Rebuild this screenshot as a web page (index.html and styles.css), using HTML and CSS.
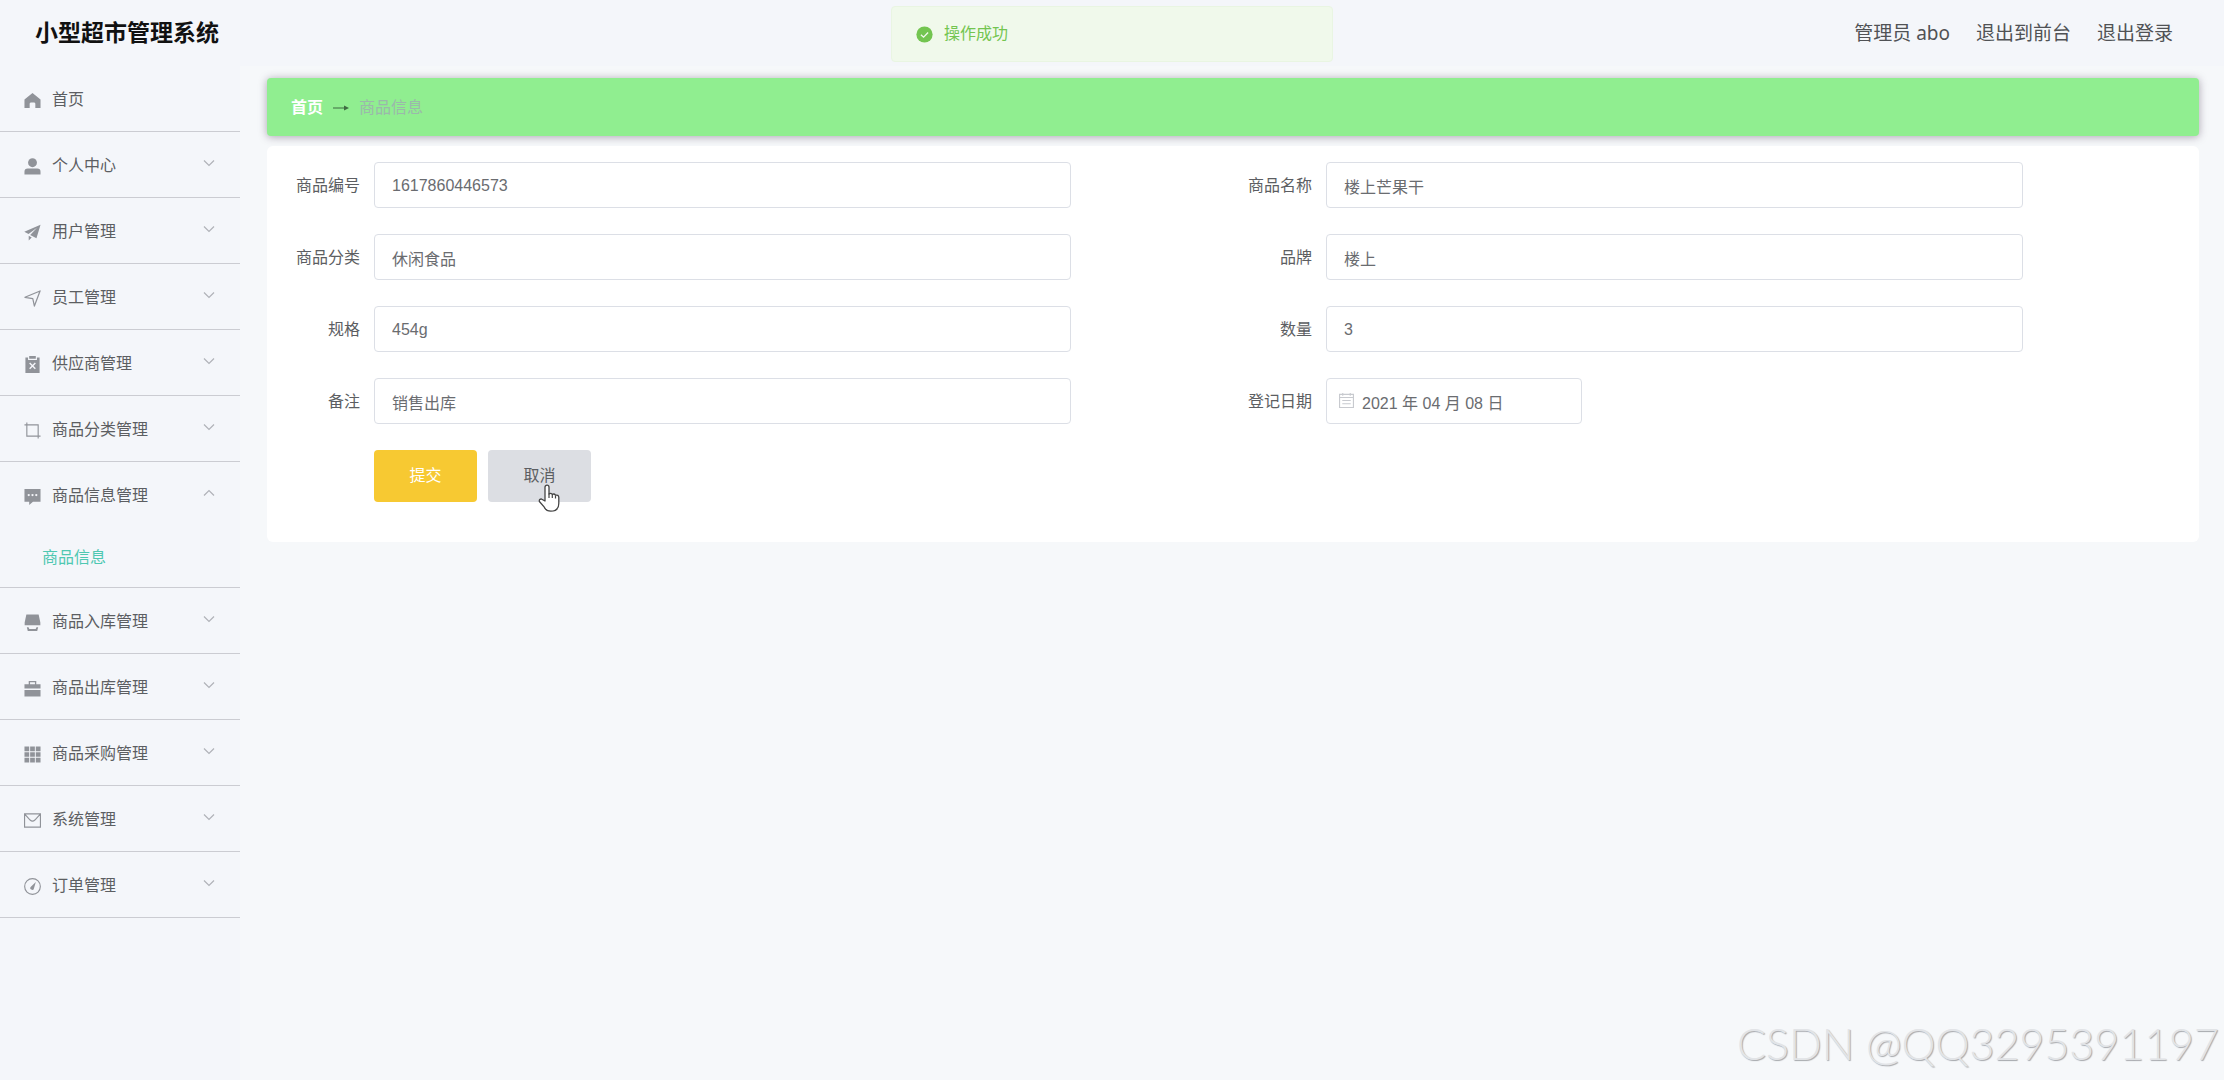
FILE: index.html
```html
<!DOCTYPE html>
<html lang="zh-CN">
<head>
<meta charset="utf-8">
<meta name="viewport" content="width=device-width, initial-scale=1">
<title>小型超市管理系统</title>
<link rel="stylesheet" href="styles.css">
</head>
<body>
<svg class="sprite" aria-hidden="true">
  <symbol id="chevron" viewBox="0 0 12 12"><path d="M1 3.5 6 8.5 11 3.5" fill="none" stroke="currentColor" stroke-width="1.2"/></symbol>
</svg>

<header class="topbar">
  <h1 class="brand">小型超市管理系统</h1>
  <nav class="account">
    <span>管理员 abo</span>
    <a href="#front">退出到前台</a>
    <a href="#logout">退出登录</a>
  </nav>
</header>

<div class="toast" role="status">
  <svg class="icon" viewBox="0 0 18 18"><circle cx="9" cy="9" r="8.6" fill="currentColor"/><path d="M5.2 9.2 8 11.8 12.8 6.8" fill="none" stroke="#f0f9eb" stroke-width="1.4"/></svg>
  <span>操作成功</span>
</div>

<div class="layout">
  <nav class="sidebar">
    <ul class="menu">
      <li><a class="entry" href="#home"><svg class="icon" viewBox="0 0 18 18"><path fill="currentColor" d="M9 1 17.5 8v9H12v-4.500a1.500 1.500 0 0 0-1.500-1.500h-3A1.500 1.500 0 0 0 6 12.500V17H.5V8z"/></svg><span>首页</span></a></li>
      <li><button class="entry" type="button"><svg class="icon" viewBox="0 0 18 18"><circle cx="9" cy="5" r="4.700" fill="currentColor"/><path fill="currentColor" d="M.5 17.500V14.500a3.500 3.500 0 0 1 3.500-3.500h10a3.500 3.500 0 0 1 3.500 3.500v3z"/></svg><span>个人中心</span><svg class="arrow"><use href="#chevron"/></svg></button></li>
      <li><button class="entry" type="button"><svg class="icon" viewBox="0 0 18 18"><path fill="currentColor" d="M17.500.8.3 8.300l4.500 2.300 9-6.500-7.300 7.600 6.700 3.500zM5 12.500v5l3.200-3.300z"/></svg><span>用户管理</span><svg class="arrow"><use href="#chevron"/></svg></button></li>
      <li><button class="entry" type="button"><svg class="icon" viewBox="0 0 18 18"><path fill="none" stroke="currentColor" stroke-width="1.300" stroke-linejoin="round" d="M17 1 1 7.700l8.300 1.500 1.700 7.800z"/></svg><span>员工管理</span><svg class="arrow"><use href="#chevron"/></svg></button></li>
      <li><button class="entry" type="button"><svg class="icon" viewBox="0 0 18 18"><path fill="currentColor" d="M5.500 0h7v3h-7zM1.500 1.500h2.800V4.200h9.400V1.500h2.800v16.500h-15z"/><path fill="none" stroke="#f5f6fa" stroke-width="1.500" d="m6 7.500 6 6m0-6-6 6"/></svg><span>供应商管理</span><svg class="arrow"><use href="#chevron"/></svg></button></li>
      <li><button class="entry" type="button"><svg class="icon" viewBox="0 0 18 18"><path fill="none" stroke="currentColor" stroke-width="1.200" d="M3 .5V15H17.500M.5 3H15V17.500"/></svg><span>商品分类管理</span><svg class="arrow"><use href="#chevron"/></svg></button></li>
      <li class="open"><button class="entry" type="button" aria-expanded="true"><svg class="icon" viewBox="0 0 18 18"><path fill="currentColor" d="M.5 1h17v13.500H9.500L5.500 18v-3.500h-5z"/><g fill="#f5f6fa"><circle cx="5" cy="7.500" r="1.200"/><circle cx="9" cy="7.500" r="1.200"/><circle cx="13" cy="7.500" r="1.200"/></g></svg><span>商品信息管理</span><svg class="arrow"><use href="#chevron"/></svg></button>
        <a class="subentry" href="#goods">商品信息</a></li>
      <li><button class="entry" type="button"><svg class="icon" viewBox="0 0 18 18"><path fill="currentColor" d="M2.500.5h13L17.300 9v3H.7V9zM3 14h1.800l.8 1.800h6.800l.8-1.800H15l-1 4H4z"/></svg><span>商品入库管理</span><svg class="arrow"><use href="#chevron"/></svg></button></li>
      <li><button class="entry" type="button"><svg class="icon" viewBox="0 0 18 18"><path fill="currentColor" d="M.5 4.500H5V1h8v3.500h4.500V9H.5zM6.400 2.400v2.100h5.200V2.400zM.5 10.500h17v7H.5z" fill-rule="evenodd"/></svg><span>商品出库管理</span><svg class="arrow"><use href="#chevron"/></svg></button></li>
      <li><button class="entry" type="button"><svg class="icon" viewBox="0 0 18 18"><path fill="currentColor" d="M.5.500h5v5h-5zm6 0h5v5h-5zm6 0h5v5h-5zm-12 6h5v5h-5zm6 0h5v5h-5zm6 0h5v5h-5zm-12 6h5v5h-5zm6 0h5v5h-5zm6 0h5v5h-5z"/></svg><span>商品采购管理</span><svg class="arrow"><use href="#chevron"/></svg></button></li>
      <li><button class="entry" type="button"><svg class="icon" viewBox="0 0 18 18"><path fill="none" stroke="currentColor" stroke-width="1.200" d="M.6 2h16.800v14H.6zM1 2.500l5.500 6q2.500 2.400 5 0l5.500-6"/></svg><span>系统管理</span><svg class="arrow"><use href="#chevron"/></svg></button></li>
      <li><button class="entry" type="button"><svg class="icon" viewBox="0 0 18 18"><circle cx="9" cy="9" r="8.300" fill="none" stroke="currentColor" stroke-width="1.200"/><path fill="currentColor" d="M12.500 4.200 10.500 11a1.900 1.900 0 1 1-3.200-1.800z"/></svg><span>订单管理</span><svg class="arrow"><use href="#chevron"/></svg></button></li>
    </ul>
  </nav>

  <main class="content">
    <nav class="crumbs">
      <a href="#home">首页</a>
      <svg class="crumb-arrow" viewBox="0 0 16 8"><path d="M0 4h14" stroke="currentColor" stroke-width="1"/><path d="m11 1.500 5 2.500-5 2.500z" fill="currentColor"/></svg>
      <span class="current">商品信息</span>
    </nav>

    <form class="card">
      <div class="field"><label for="code">商品编号</label><input id="code" type="text" value="1617860446573"></div>
      <div class="field"><label for="name">商品名称</label><input id="name" type="text" value="楼上芒果干"></div>
      <div class="field"><label for="kind">商品分类</label><input id="kind" type="text" value="休闲食品"></div>
      <div class="field"><label for="brand">品牌</label><input id="brand" type="text" value="楼上"></div>
      <div class="field"><label for="spec">规格</label><input id="spec" type="text" value="454g"></div>
      <div class="field"><label for="count">数量</label><input id="count" type="text" value="3"></div>
      <div class="field"><label for="note">备注</label><input id="note" type="text" value="销售出库"></div>
      <div class="field"><label for="date">登记日期</label>
        <div class="date"><svg class="calendar" viewBox="0 0 16 16"><path d="M.6 1.500h14.800v13.900H.6zM.6 4.800h14.800M3.500 8h9M3.500 11.500h9M4 0v3M12 0v3" fill="none" stroke="currentColor" stroke-width="1.200"/></svg><input id="date" type="text" value="2021 年 04 月 08 日"></div>
      </div>
      <div class="actions">
        <button class="btn primary" type="submit">提交</button>
        <button class="btn" type="button">取消<svg class="pointer" viewBox="0 0 22 28"><path d="M7 17V3.200a2 2 0 0 1 4 0V10q2-1.500 3.300.4 2-1 3.200.8 3-.6 3.300 2v6q0 8-8 8-4.500 0-6.500-4L1.400 17.500q-.6-2.500 2-2.500z" fill="#fff" stroke="#444" stroke-width="1.300" stroke-linejoin="round"/><path d="M11 9.500V14M14.300 10.500V14M17.500 11.500V14.500" stroke="#444" stroke-width="1.200"/></svg></button>
      </div>
    </form>
  </main>
</div>

<div class="watermark">CSDN @QQ3295391197</div>
</body>
</html>
```
FILE: styles.css
```css
* { box-sizing: border-box; }

body {
  margin: 0;
  min-height: 100vh;
  display: flex;
  flex-direction: column;
  background: #f6f8fa;
  color: #5c5e62;
  font: 16px/24px "Liberation Sans", "Noto Sans CJK SC", sans-serif;
}

a { color: inherit; text-decoration: none; }
button, input { font: inherit; color: inherit; }
.sprite { position: absolute; width: 0; height: 0; }

/* Header */
.topbar {
  display: flex;
  align-items: center;
  justify-content: space-between;
  height: 66px;
  padding: 0 51px 0 35px;
  background: #f4f6fa;
}
.brand {
  margin: 0;
  color: #111;
  font-size: 23px;
  line-height: 32px;
  font-weight: 700;
}
.account {
  display: flex;
  gap: 26px;
  color: #505255;
  font-family: "Noto Sans", "Noto Sans CJK SC", sans-serif;
  font-size: 19px;
}

.toast {
  position: absolute;
  top: 6px;
  left: 50%;
  transform: translateX(-50%);
  display: flex;
  align-items: center;
  gap: 11px;
  width: 442px;
  height: 56px;
  padding: 0 24px;
  border: 1px solid #e9f5e2;
  border-radius: 4px;
  background: #f0f9eb;
  color: #73c550;
}

/* Sidebar */
.layout { flex: 1; display: flex; }
.sidebar {
  flex: none;
  width: 240px;
  background: #f4f6fa;
}
.menu { margin: 0; padding: 0; list-style: none; }
.menu li { border-bottom: 1px solid #cbccd2; }
.entry {
  display: flex;
  align-items: center;
  gap: 11px;
  width: 100%;
  height: 65px;
  padding: 3px 24px 0;
  border: 0;
  background: none;
  text-align: left;
  cursor: pointer;
}
.icon { flex: none; width: 17px; height: 17px; }
.entry .icon { color: #909399; }
.arrow {
  width: 12px;
  height: 12px;
  margin: 0 1px 6px auto;
  color: #b0b2b8;
}
.open .arrow { transform: rotate(180deg); }
.subentry {
  display: flex;
  align-items: center;
  height: 60px;
  padding: 2px 0 0 42px;
  color: #4fc8b2;
}

/* Content */
.content { flex: 1; min-width: 0; padding: 12px 25px 12px 27px; }
.crumbs {
  display: flex;
  align-items: center;
  gap: 10px;
  height: 58px;
  padding: 2px 24px 0;
  border-radius: 4px;
  background: #90ee90;
  box-shadow: 0 1px 8px rgba(60, 40, 70, 0.4);
}
.crumbs a { color: #fff; font-weight: 700; }
.crumb-arrow { width: 16px; height: 8px; color: #3f6b42; }
.current { color: #9bb8ab; }

.card {
  display: grid;
  grid-template-columns: 1fr 1fr;
  row-gap: 26px;
  margin-top: 10px;
  padding: 16px 14px 40px;
  border-radius: 6px;
  background: #fff;
}
.field {
  display: flex;
  align-items: center;
  padding-right: 162px;
}
.field label {
  flex: none;
  width: 93px;
  padding: 2px 14px 0 0;
  text-align: right;
}
.field input {
  flex: 1;
  min-width: 0;
  height: 46px;
  padding: 1px 17px 0;
  border: 1px solid #dcdfe6;
  border-radius: 4px;
  background: #fff;
  color: #6a6c70;
}
.date { position: relative; display: flex; width: 256px; }
.date input { padding-left: 35px; }
.calendar {
  position: absolute;
  top: 15px;
  left: 13px;
  width: 15px;
  height: 15px;
  color: #c8cacf;
}
.actions {
  grid-column: 1 / -1;
  display: flex;
  gap: 11px;
  padding-left: 93px;
}
.btn {
  position: relative;
  width: 103px;
  height: 52px;
  padding: 0;
  border: 0;
  border-radius: 4px;
  background: #dcdee3;
  cursor: pointer;
}
.primary { background: #f7c932; color: #fff; }
.pointer {
  position: absolute;
  top: 34px;
  left: 50px;
  width: 22px;
  height: 28px;
}

.watermark {
  position: absolute;
  right: 5px;
  bottom: 12px;
  color: #e2e4e7;
  font-family: Lato, "Liberation Sans", sans-serif;
  font-weight: 300;
  font-size: 43px;
  line-height: 48px;
  text-shadow: 1px 1px 1px #a6a8ac;
}
```
